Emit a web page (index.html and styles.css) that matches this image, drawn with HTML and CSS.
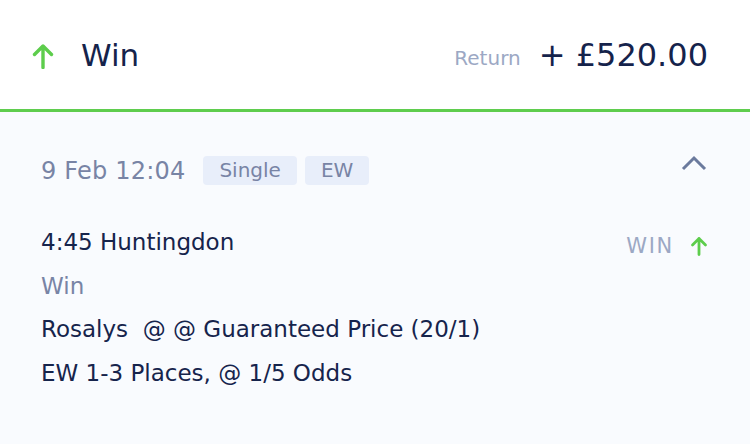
FILE: index.html
```html
<!DOCTYPE html>
<html lang="en">
<head>
<meta charset="utf-8">
<title>Bet</title>
<link rel="stylesheet" href="styles.css">
</head>
<body>
<div class="bet">
  <header class="bet-head">
    <svg class="arrow-lg" width="22" height="26" viewBox="0 0 22 26" aria-hidden="true">
      <path d="M11 24.5V3 M2.5 11.5L11 3l8.5 8.5" fill="none" stroke="#5dcd4c" stroke-width="3.4" stroke-linecap="round" stroke-linejoin="round"/>
    </svg>
    <span class="head-title">Win</span>
    <div class="head-right">
      <span class="return-label">Return</span>
      <span class="return-value">+ £520.00</span>
    </div>
  </header>
  <section class="bet-body">
    <div class="meta-row">
      <span class="date">9 Feb 12:04</span>
      <span class="tag">Single</span>
      <span class="tag">EW</span>
      <svg class="chevron" width="26" height="16" viewBox="0 0 26 16" aria-hidden="true">
        <path d="M2 14L13 3l11 11" fill="none" stroke="#6b7a9d" stroke-width="3"/>
      </svg>
    </div>
    <div class="details">
      <div class="lines">
        <div class="line">4:45 Huntingdon</div>
        <div class="line muted">Win</div>
        <div class="line">Rosalys &nbsp;@ @ Guaranteed Price (20/1)</div>
        <div class="line">EW 1-3 Places, @ 1/5 Odds</div>
      </div>
      <div class="result">
        <span class="result-label">WIN</span>
        <svg class="arrow-sm" width="18" height="20" viewBox="0 0 18 20" aria-hidden="true">
          <path d="M9 18.5V2.5 M2.5 9L9 2.5 15.5 9" fill="none" stroke="#5dcd4c" stroke-width="2.8" stroke-linecap="round" stroke-linejoin="round"/>
        </svg>
      </div>
    </div>
  </section>
</div>
</body>
</html>
```
FILE: styles.css
```css
html, body {
  margin: 0;
  padding: 0;
}
body {
  font-family: "DejaVu Sans", Verdana, sans-serif;
  background: #f9fbfe;
  color: #16244c;
  width: 750px;
  height: 444px;
  overflow: hidden;
}
.bet-head {
  height: 109px;
  background: #ffffff;
  border-bottom: 3px solid #5fcd4e;
  display: flex;
  align-items: center;
  padding: 0 42px 0 32px;
  box-sizing: content-box;
}
.arrow-lg {
  display: block;
  margin-top: 2px;
}
.head-title {
  font-size: 31px;
  margin-left: 27px;
  color: #15234b;
}
.head-right {
  margin-left: auto;
  display: flex;
  align-items: baseline;
  gap: 18px;
}
.return-label {
  font-size: 20px;
  color: #9ca8c4;
  position: relative;
  top: -1px;
}
.return-value {
  font-size: 32px;
  color: #15234b;
}
.bet-body {
  padding: 44px 43px 0 41px;
}
.meta-row {
  display: flex;
  align-items: center;
  height: 29px;
}
.date {
  font-size: 24px;
  letter-spacing: 0.2px;
  color: #7884a5;
  margin-right: 18px;
}
.tag {
  font-size: 20px;
  color: #7884a5;
  background: #e8eefa;
  border-radius: 4px;
  height: 29px;
  line-height: 29px;
  padding: 0 16px;
  margin-right: 8px;
}
.chevron {
  margin-left: auto;
  margin-top: -16px;
  display: block;
}
.details {
  display: flex;
  justify-content: space-between;
  margin-top: 36px;
}
.line {
  font-size: 23px;
  line-height: 43.5px;
}
.muted {
  color: #7884a5;
}
.result {
  display: flex;
  align-items: center;
  gap: 16px;
  height: 43.5px;
  margin-top: 3px;
}
.result-label {
  font-size: 21px;
  letter-spacing: 1.7px;
  color: #9ca8c4;
}
.arrow-sm {
  display: block;
  margin-right: -1px;
}
```
